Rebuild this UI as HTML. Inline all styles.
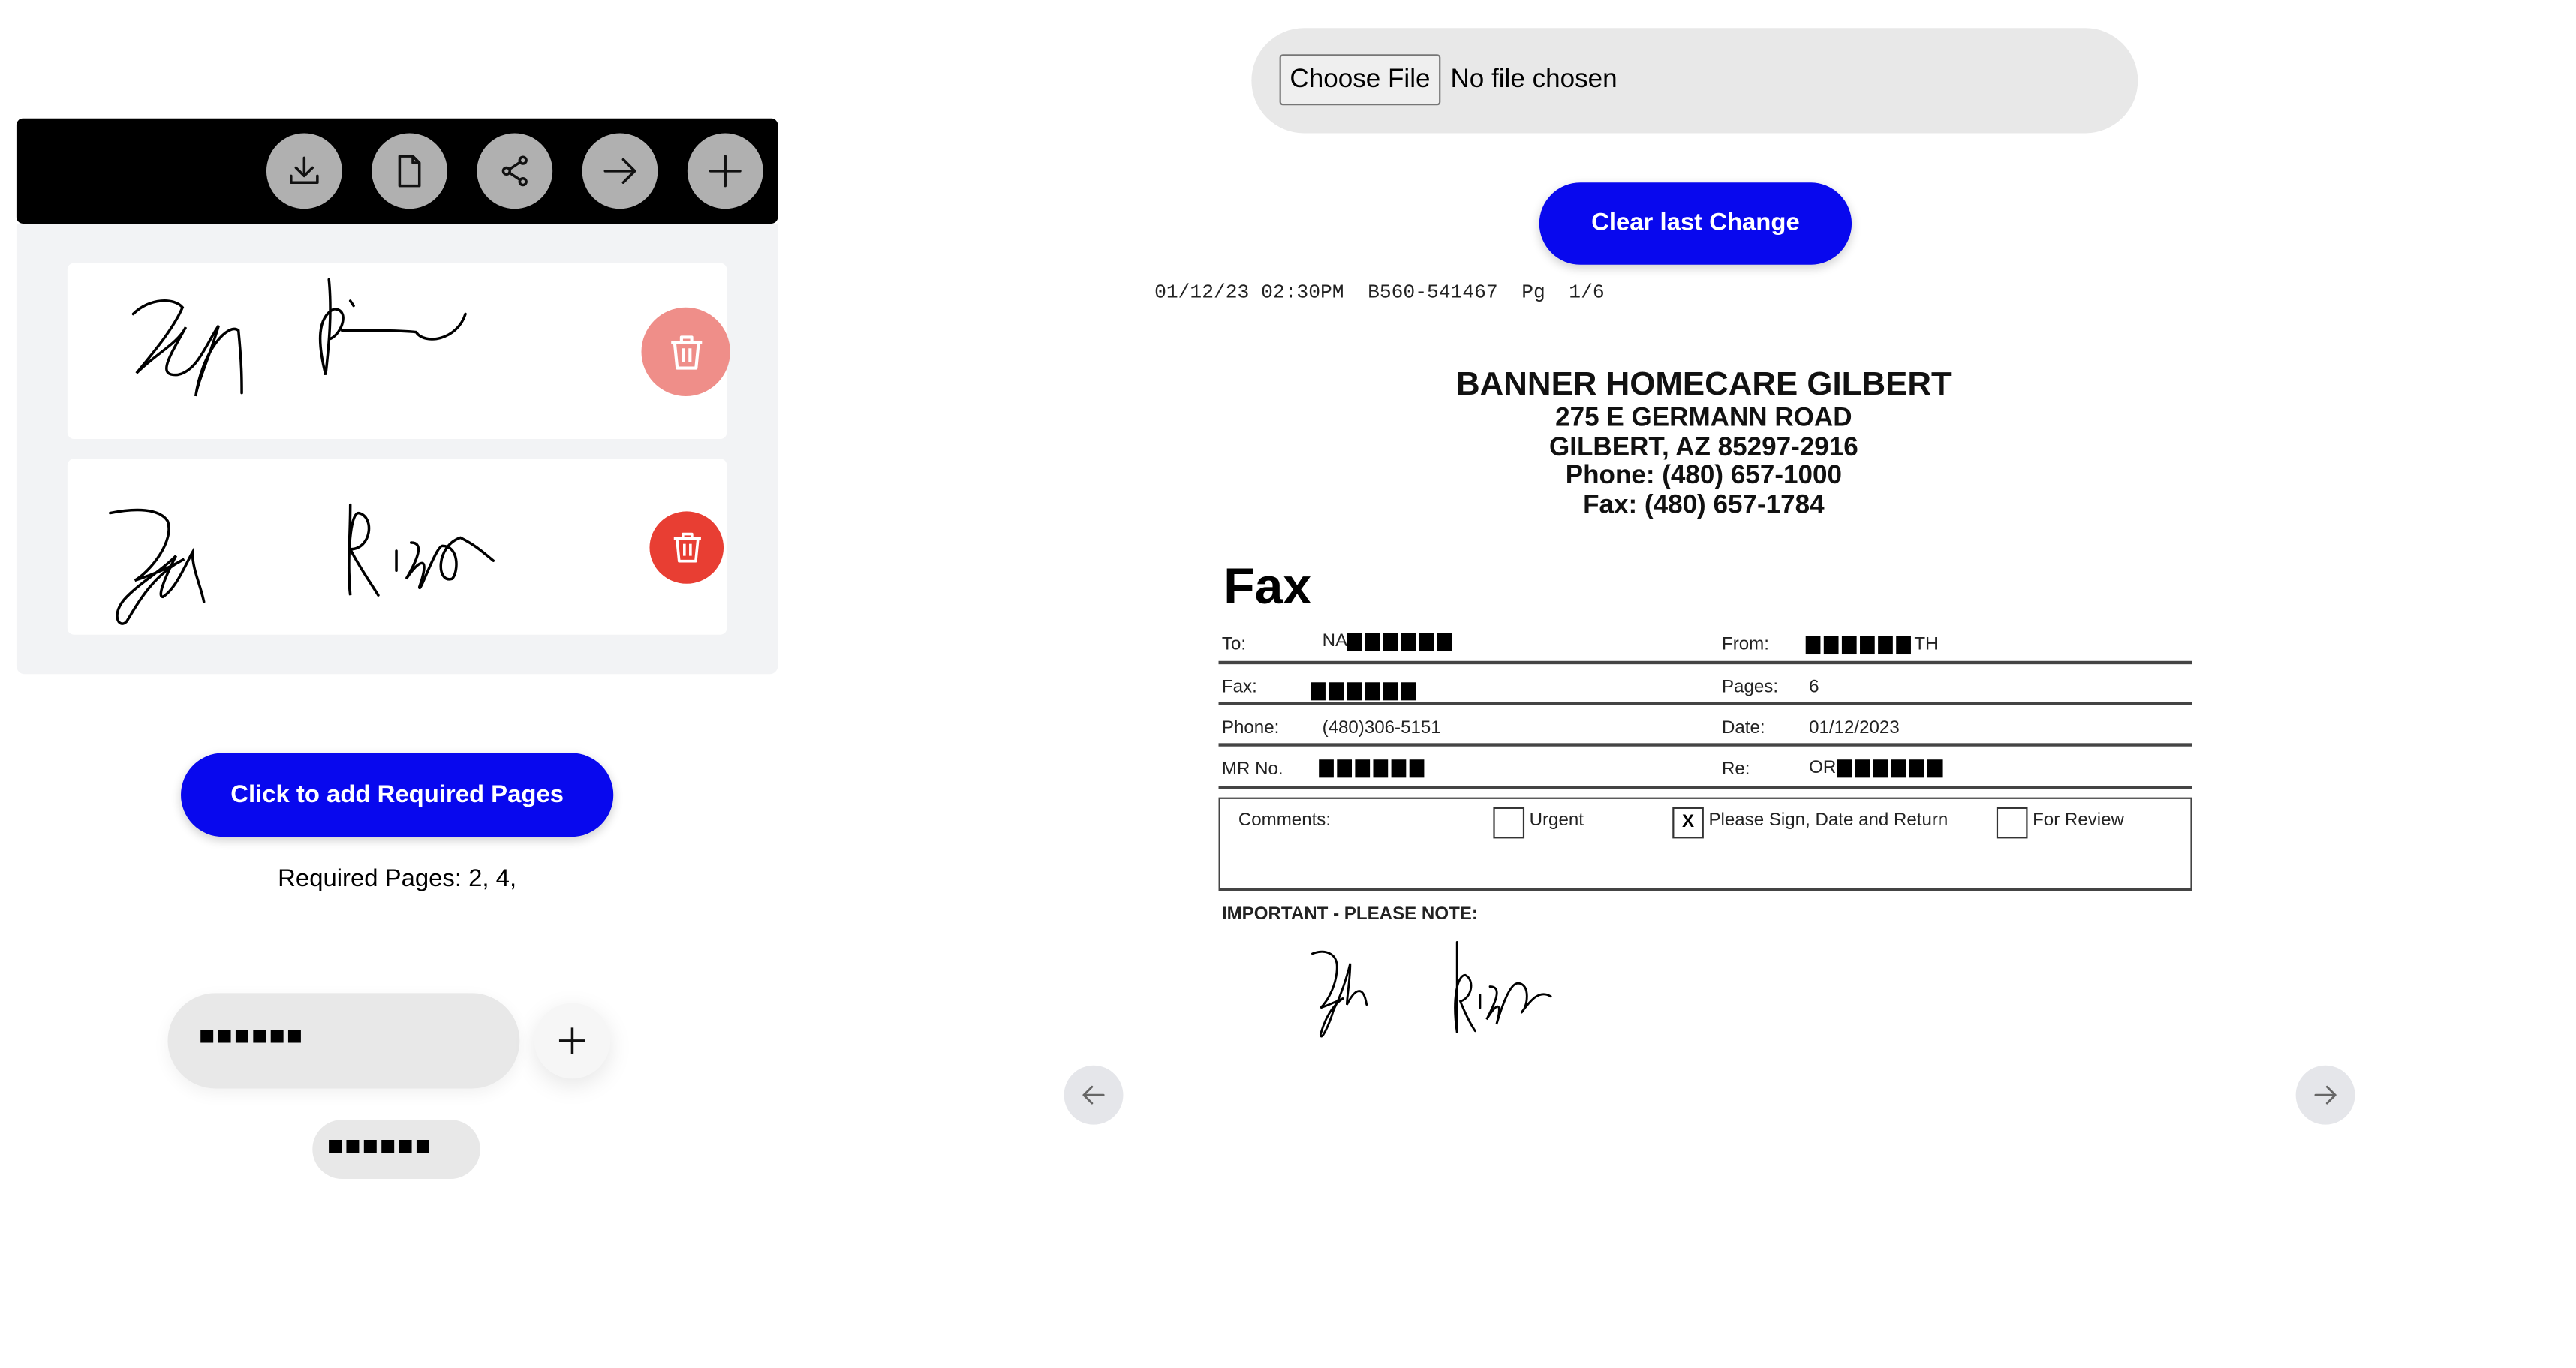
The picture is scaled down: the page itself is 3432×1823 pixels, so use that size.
<!DOCTYPE html>
<html><head><meta charset="utf-8"><style>
html,body{margin:0;padding:0;background:#fff;width:3432px;height:1820px;overflow:hidden}
#w{position:absolute;left:0;top:0;width:1570px;height:832px;transform:scale(2.191);transform-origin:0 0;font-family:"Liberation Sans",sans-serif}
.a{position:absolute}
.cb{position:absolute;width:46px;height:46px;border-radius:50%;background:#b0b0b0;top:81px}
.cb svg{position:absolute;left:11px;top:11px}
.row{position:absolute;left:741px;width:592px;border-top:2px solid #444}
.lb{position:absolute;font-size:11px;color:#222}
.blk{display:inline-block;width:9px;height:11px;background:#000;margin-right:2px;vertical-align:middle}
.bb{position:absolute;background:#0808ee;color:#fff;font-weight:bold;font-size:15px;text-align:center;border-radius:26px;box-shadow:0 2px 6px rgba(0,0,0,.2)}
</style></head><body><div id="w">
<div class="a" style="left:10px;top:72px;width:463px;height:64px;background:#000;border-radius:4px"></div>
<div class="cb" style="left:162px"><svg width="24" height="24" viewBox="0 0 24 24" fill="none" stroke="#111" stroke-width="1.6" stroke-linecap="round" stroke-linejoin="round"><path d="M12 4v11M7 10l5 5 5-5M4 15v4h16v-4"/></svg></div>
<div class="cb" style="left:226px"><svg width="24" height="24" viewBox="0 0 24 24" fill="none" stroke="#111" stroke-width="1.6" stroke-linejoin="round"><path d="M6 3h8l4 4v14H6z M14 3v4h4"/></svg></div>
<div class="cb" style="left:290px"><svg width="24" height="24" viewBox="0 0 24 24" fill="none" stroke="#111" stroke-width="1.6"><circle cx="17" cy="5.5" r="2"/><circle cx="7" cy="12" r="2"/><circle cx="17" cy="18.5" r="2"/><path d="M8.7 11l6.6-4.4M8.7 13l6.6 4.4"/></svg></div>
<div class="cb" style="left:354px"><svg width="24" height="24" viewBox="0 0 24 24" fill="none" stroke="#111" stroke-width="1.6" stroke-linecap="round" stroke-linejoin="round"><path d="M3 12h18M14 5l7 7-7 7"/></svg></div>
<div class="cb" style="left:418px"><svg width="24" height="24" viewBox="0 0 24 24" fill="none" stroke="#111" stroke-width="1.6" stroke-linecap="round"><path d="M12 3v18M3 12h18"/></svg></div>
<div class="a" style="left:10px;top:136px;width:463px;height:274px;background:#f2f3f5;border-radius:0 0 5px 5px"></div>
<div class="a" style="left:41px;top:160px;width:401px;height:107px;background:#fff;border-radius:4px"></div>
<div class="a" style="left:41px;top:279px;width:401px;height:107px;background:#fff;border-radius:4px"></div>
<svg class="a" style="left:60px;top:165px" width="260" height="100" viewBox="0 0 260 100" fill="none" stroke="#000" stroke-width="1.6" stroke-linecap="round"><path d="M21 26c10-10 25-10 30-4-6 14-20 30-28 40 12-12 25-18 30-28-10 18-18 30-5 29 12-2 18-20 25-30-6 20-13 35-14 43 4-28 20-45 26-40 2 20 2 30 2 38M140 5c2 20 0 40-2 58-5-20-5-35 5-40 10 0 5 15-2 18M153 18l2 3M148 36c20 0 35 0 45 1 5 8 25 5 30-11"/></svg>
<svg class="a" style="left:55px;top:295px" width="280" height="90" viewBox="0 0 280 90" fill="none" stroke="#000" stroke-width="1.6" stroke-linecap="round"><path d="M12 17c15-3 30-3 35 5 4 12-10 30-20 36 15-5 25-10 30-13-20 10-30 30-35 38-5 5-10-5 0-15 10-10 20-15 30-25-5 10-12 25-8 25 8-5 14-20 18-27 0 10 5 20 7 30M158 12c0 20-2 40 0 55-2-25 0-50 5-50 10 2 8 22-5 22 5 10 12 20 17 28M186 40v12M195 35c8 0 4 10-3 22 8-12 15-15 8 5 0 5 10-25 14-25 10 0 10 15 6 20-10 3-10-20 5-25 10 5 15 10 20 14"/></svg>
<div class="a" style="left:390px;top:187px;width:54px;height:54px;border-radius:50%;background:#ef8e89"></div>
<svg class="a" style="left:405px;top:202px" width="25" height="25" viewBox="0 0 24 24" fill="none" stroke="#fff" stroke-width="1.8" stroke-linejoin="round"><path d="M3 6h18M9 6V3h6v3M5 6l1.5 15h11L19 6M10 9.5v8M14 9.5v8"/></svg>
<div class="a" style="left:395px;top:311px;width:45px;height:44px;border-radius:50%;background:#e83e33"></div>
<svg class="a" style="left:407px;top:322px" width="22" height="22" viewBox="0 0 24 24" fill="none" stroke="#fff" stroke-width="1.8" stroke-linejoin="round"><path d="M3 6h18M9 6V3h6v3M5 6l1.5 15h11L19 6M10 9.5v8M14 9.5v8"/></svg>
<div class="bb" style="left:110px;top:458px;width:263px;height:51px;line-height:51px">Click to add Required Pages</div>
<div class="a" style="left:110px;width:263px;top:526px;text-align:center;font-size:15px">Required Pages: 2, 4,</div>
<div class="a" style="left:102px;top:604px;width:214px;height:58px;background:#e8e8e8;border-radius:29px;box-shadow:0 3px 10px rgba(0,0,0,.06)"></div>
<div class="a" style="left:121px;top:622px;font-size:16px;letter-spacing:1px">■■■■■■</div>
<div class="a" style="left:325px;top:610px;width:46px;height:46px;border-radius:50%;background:#f6f6f6;box-shadow:0 4px 14px rgba(0,0,0,.1)"></div>
<svg class="a" style="left:338px;top:623px" width="20" height="20" viewBox="0 0 20 20" stroke="#111" stroke-width="1.6"><path d="M10 2v16M2 10h16"/></svg>
<div class="a" style="left:190px;top:681px;width:102px;height:36px;background:#e8e8e8;border-radius:18px"></div>
<div class="a" style="left:199px;top:689px;font-size:16px;letter-spacing:1px">■■■■■■</div>

<div class="a" style="left:761px;top:17px;width:539px;height:64px;background:#e8e8e8;border-radius:32px"></div>
<div class="a" style="left:778px;top:33px;width:98px;height:31px;border:1px solid #767676;border-radius:2px;background:#efefef;box-sizing:border-box;font-size:16px;line-height:29px;text-align:center">Choose File</div>
<div class="a" style="left:882px;top:40px;font-size:16px">No file chosen</div>
<div class="bb" style="left:936px;top:111px;width:190px;height:50px;line-height:50px">Clear last Change</div>
<div class="a" style="left:702px;top:171px;font-family:'Liberation Mono',monospace;font-size:12px;white-space:pre;color:#222">01/12/23 02:30PM  B560-541467  Pg  1/6</div>
<div class="a" style="left:836px;width:400px;top:223px;text-align:center;font-weight:bold;font-size:20px;color:#111">BANNER HOMECARE GILBERT</div>
<div class="a" style="left:836px;width:400px;top:246px;text-align:center;font-weight:bold;font-size:16px;line-height:17.5px;color:#111">275 E GERMANN ROAD<br>GILBERT, AZ 85297-2916<br>Phone: (480) 657-1000<br>Fax: (480) 657-1784</div>
<div class="a" style="left:744px;top:339px;font-weight:bold;font-size:31px">Fax</div>
<div class="row" style="top:402px"></div><div class="row" style="top:427px"></div><div class="row" style="top:452px"></div><div class="row" style="top:478px"></div>
<div class="lb" style="left:743px;top:386px">To:</div><div class="lb" style="left:804px;top:384px">NA<span class="blk"></span><span class="blk"></span><span class="blk"></span><span class="blk"></span><span class="blk"></span><span class="blk"></span></div>
<div class="lb" style="left:1047px;top:386px">From:</div><div class="lb" style="left:1098px;top:386px"><span class="blk"></span><span class="blk"></span><span class="blk"></span><span class="blk"></span><span class="blk"></span><span class="blk"></span>TH</div>
<div class="lb" style="left:743px;top:412px">Fax:</div><div class="lb" style="left:797px;top:414px"><span class="blk"></span><span class="blk"></span><span class="blk"></span><span class="blk"></span><span class="blk"></span><span class="blk"></span></div>
<div class="lb" style="left:1047px;top:412px">Pages:</div><div class="lb" style="left:1100px;top:412px">6</div>
<div class="lb" style="left:743px;top:437px">Phone:</div><div class="lb" style="left:804px;top:437px">(480)306-5151</div>
<div class="lb" style="left:1047px;top:437px">Date:</div><div class="lb" style="left:1100px;top:437px">01/12/2023</div>
<div class="lb" style="left:743px;top:462px">MR No.</div><div class="lb" style="left:802px;top:461px"><span class="blk"></span><span class="blk"></span><span class="blk"></span><span class="blk"></span><span class="blk"></span><span class="blk"></span></div>
<div class="lb" style="left:1047px;top:462px">Re:</div><div class="lb" style="left:1100px;top:461px">OR<span class="blk"></span><span class="blk"></span><span class="blk"></span><span class="blk"></span><span class="blk"></span><span class="blk"></span></div>
<div class="a" style="left:741px;top:485px;width:592px;height:57px;border:1px solid #444;border-bottom:2px solid #444;box-sizing:border-box"></div>
<div class="lb" style="left:753px;top:493px">Comments:</div>
<div class="a" style="left:908px;top:491px;width:19px;height:19px;border:1.5px solid #333;box-sizing:border-box"></div><div class="lb" style="left:930px;top:493px">Urgent</div>
<div class="a" style="left:1017px;top:491px;width:19px;height:19px;border:1.5px solid #333;box-sizing:border-box;font-size:11px;font-weight:bold;text-align:center;line-height:16px">X</div><div class="lb" style="left:1039px;top:493px">Please Sign, Date and Return</div>
<div class="a" style="left:1214px;top:491px;width:19px;height:19px;border:1.5px solid #333;box-sizing:border-box"></div><div class="lb" style="left:1236px;top:493px">For Review</div>
<div class="lb" style="left:743px;top:550px;font-weight:bold">IMPORTANT - PLEASE NOTE:</div>
<svg class="a" style="left:788px;top:570px" width="170" height="65" viewBox="0 0 170 65" fill="none" stroke="#000" stroke-width="1.3" stroke-linecap="round"><path d="M10 10c8-3 15 0 15 8 0 10-5 20-10 25 8-3 12-5 14-6-8 5-12 15-14 22 0 5 5-5 8-15 5-10 8-20 10-28 0 10-2 20-2 25 5-10 10-12 12 0M98 3v55c-3-20 0-35 5-35 6 3 4 14-3 16 4 10 7 15 9 18M112 35v8M118 30c8 0 3 10-2 20 6-10 10-12 6 3 3-10 8-25 13-25 8 0 6 15 2 18 4-5 10-15 18-10"/></svg>
<div class="a" style="left:647px;top:648px;width:36px;height:36px;border-radius:50%;background:#e5e6ea"></div>
<svg class="a" style="left:656px;top:657px" width="18" height="18" viewBox="0 0 18 18" fill="none" stroke="#666" stroke-width="1.3" stroke-linecap="round" stroke-linejoin="round"><path d="M15 9H3M8 4L3 9l5 5"/></svg>
<div class="a" style="left:1396px;top:648px;width:36px;height:36px;border-radius:50%;background:#e5e6ea"></div>
<svg class="a" style="left:1405px;top:657px" width="18" height="18" viewBox="0 0 18 18" fill="none" stroke="#666" stroke-width="1.3" stroke-linecap="round" stroke-linejoin="round"><path d="M3 9h12M10 4l5 5-5 5"/></svg>
</div></body></html>
